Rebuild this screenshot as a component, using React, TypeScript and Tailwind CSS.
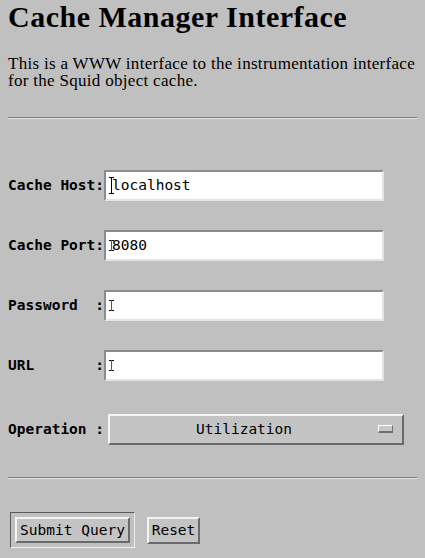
import React from 'react';

const serif = { fontFamily: '"Liberation Serif", "Times New Roman", serif' };
const mono = { fontFamily: '"DejaVu Sans Mono", "Liberation Mono", monospace' };

// text cursor drawn at the start of each field
const IBeam: React.FC<{ big?: boolean }> = ({ big }) => (
    <span className={`absolute left-[3px] ${big ? 'top-[5px] h-[17px]' : 'top-[8px] h-[11px]'} w-[5px]`}>
        <span className="absolute left-0 right-0 top-0 h-[1px] bg-black" />
        <span className="absolute left-0 right-0 bottom-0 h-[1px] bg-black" />
        <span className={`absolute left-[2px] top-0 bottom-0 w-[1px] ${big ? 'bg-black' : 'bg-[#555]'}`} />
    </span>
);

const TextField: React.FC<{ value?: string; big?: boolean }> = ({ value, big }) => (
    <div className="relative w-[280px] h-[31px] shrink-0 bg-white border-t-2 border-l-2 border-t-[#8c8c8c] border-l-[#8c8c8c] border-b-2 border-r-2 border-b-[#e4e4e4] border-r-[#e4e4e4] flex items-center pl-[6px] text-[14.5px] text-black" style={mono}>
        <IBeam big={big} />
        <span>{value}</span>
    </div>
);

const rows = [
    { label: 'Cache Host:', value: 'localhost', big: true },
    { label: 'Cache Port:', value: '8080' },
    { label: 'Password  :', value: '' },
    { label: 'URL       :', value: '' },
];

const raised = 'bg-[#c4c4c4] border-t-2 border-l-2 border-t-[#f4f4f4] border-l-[#f4f4f4] border-b-2 border-r-2 border-b-[#6a6a6a] border-r-[#6a6a6a]';

export default function App() {
    return (
        <div className="min-h-screen bg-[#c0c0c0] px-2 text-black">
            <h1 className="pt-[1px] text-[30px] leading-[32px] font-bold tracking-[0.5px]" style={serif}>Cache Manager Interface</h1>
            <p className="mt-[22px] text-[17px] leading-[17px] tracking-[0.3px]" style={serif}>
                This is a WWW interface to the instrumentation interface<br />for the Squid object cache.
            </p>
            <div className="mt-[28px] w-[409px] h-[2px] border-t border-t-[#7c7c7c] border-b border-b-[#e6e6e6]" />

            <div className="mt-[51px] flex flex-col gap-[29px]">
                {rows.map(r => (
                    <div key={r.label} className="flex items-center">
                        <span className="w-[96px] shrink-0 whitespace-pre text-[14.5px] font-bold" style={mono}>{r.label}</span>
                        <TextField value={r.value} big={r.big} />
                    </div>
                ))}
                <div className="flex items-center mt-[4px]">
                    <span className="w-[100px] shrink-0 whitespace-pre text-[14.5px] font-bold" style={mono}>Operation :</span>
                    <div className={`relative w-[296px] h-[31px] flex items-center ${raised} bg-[#c0c0c0]`} style={mono}>
                        <span className="pl-[86px] text-[14.5px]">Utilization</span>
                        <span className="absolute right-[9px] top-[9px] w-[15px] h-[8px] bg-[#c8c8c8] border-t border-l border-t-white border-l-white border-b-2 border-r border-b-[#6e6e6e] border-r-[#6e6e6e]" />
                    </div>
                </div>
            </div>

            <div className="mt-[32px] w-[409px] h-[2px] border-t border-t-[#7c7c7c] border-b border-b-[#e6e6e6]" />

            <div className="mt-[33px] flex items-center gap-[12px] pl-[2px]" style={mono}>
                <div className="border border-t-[#5a5a5a] border-l-[#5a5a5a] border-b-[#efefef] border-r-[#efefef] p-[4px]">
                    <button className={`h-[26px] w-[115px] text-[14.5px] leading-none ${raised}`} style={mono}>Submit Query</button>
                </div>
                <button className={`h-[27px] w-[53px] text-[14.5px] leading-none ${raised}`} style={mono}>Reset</button>
            </div>
        </div>
    );
}
